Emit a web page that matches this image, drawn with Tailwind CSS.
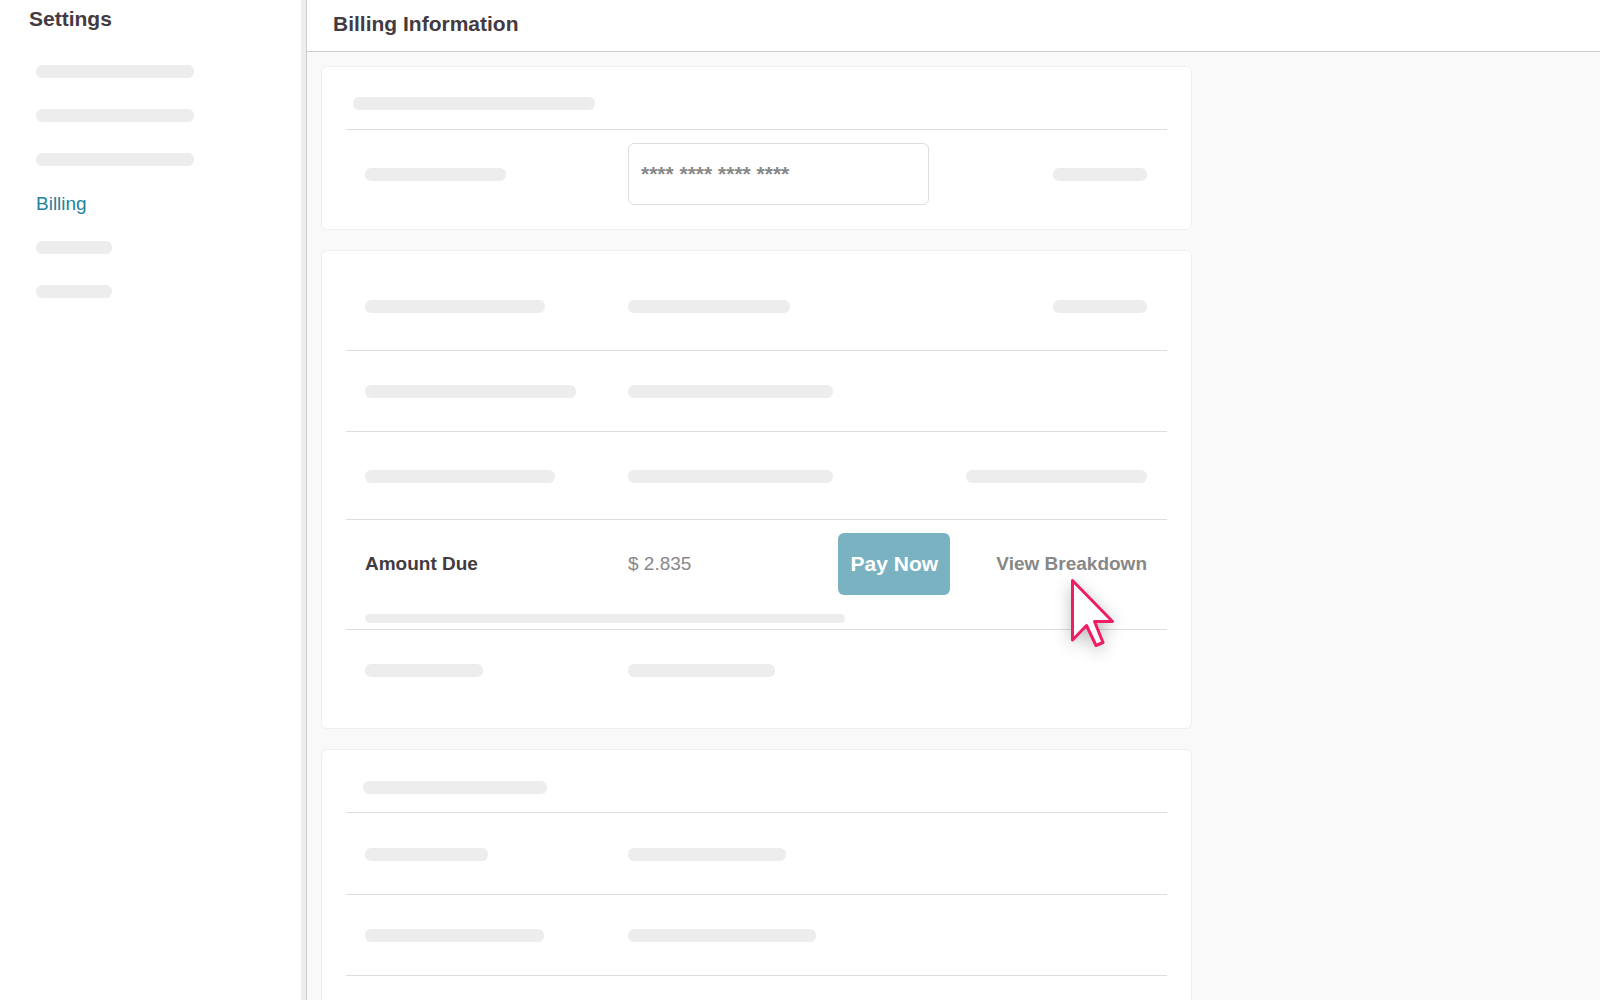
<!DOCTYPE html>
<html lang="en">
<head>
<meta charset="utf-8">
<meta name="viewport" content="width=device-width, initial-scale=1">
<title>Billing Information</title>
<script src="https://cdn.jsdelivr.net/npm/@tailwindcss/browser@4"></script>
</head>
<body class="flex h-screen overflow-hidden bg-white font-['Liberation_Sans',Arial,sans-serif] text-[19px] leading-6 text-[#433b41]">
  <aside class="w-[307px] shrink-0 border-r border-[#cccccc]">
    <div class="h-full border-r-[5px] border-[#ededed] pt-[5px]">
      <h2 class="pl-[29px] text-[21px] leading-7 font-bold">Settings</h2>
      <nav class="mt-8 pl-9" aria-label="Settings">
        <ul class="flex flex-col gap-[31px]">
          <li class="h-[13px] w-[158px] rounded-md bg-[#ededed]"></li>
          <li class="h-[13px] w-[158px] rounded-md bg-[#ededed]"></li>
          <li class="h-[13px] w-[158px] rounded-md bg-[#ededed]"></li>
          <li class="flex h-[13px] items-center"><a href="#billing" aria-current="page" class="text-[#24839b]">Billing</a></li>
          <li class="h-[13px] w-[76px] rounded-md bg-[#ededed]"></li>
          <li class="h-[13px] w-[76px] rounded-md bg-[#ededed]"></li>
        </ul>
      </nav>
    </div>
  </aside>

  <div class="flex min-w-0 flex-1 flex-col">
    <header class="flex h-[52px] shrink-0 items-center border-b border-[#cccccc] pb-1 pl-[26px]">
      <h1 class="text-[21px] leading-7 font-bold">Billing Information</h1>
    </header>

    <main id="billing" class="flex flex-1 flex-col gap-5 overflow-hidden bg-[#f9f9f9] p-3.5 pb-0">
      <!-- Payment method -->
      <section class="w-full max-w-[871px] shrink-0 rounded-md border border-[#efefef] bg-white px-6">
        <div class="border-b border-[#dddddd] pt-[30px] pb-[19px] pl-[7px]">
          <div class="h-[13px] w-[242px] rounded-md bg-[#ededed]"></div>
        </div>
        <div class="grid grid-cols-[263px_1fr_auto] items-center pt-[13px] pr-5 pb-6 pl-[19px]">
          <div class="h-[13px] w-[141px] rounded-md bg-[#ededed]"></div>
          <input type="text" aria-label="Card number" value="**** **** **** ****" class="h-[62px] w-[301px] rounded-md border border-[#dddddd] bg-white px-3 text-[21px] font-bold text-[#888888]">
          <div class="h-[13px] w-[94px] rounded-md bg-[#ededed]"></div>
        </div>
      </section>

      <!-- Plan and amount due -->
      <section class="w-full max-w-[871px] shrink-0 rounded-md border border-[#efefef] bg-white px-6">
        <div class="grid grid-cols-[263px_1fr_auto] border-b border-[#dddddd] pt-[49px] pr-5 pb-[37px] pl-[19px]">
          <div class="h-[13px] w-[180px] rounded-md bg-[#ededed]"></div>
          <div class="h-[13px] w-[162px] rounded-md bg-[#ededed]"></div>
          <div class="h-[13px] w-[94px] rounded-md bg-[#ededed]"></div>
        </div>
        <div class="grid grid-cols-[263px_1fr_auto] border-b border-[#dddddd] pt-[34px] pr-5 pb-[33px] pl-[19px]">
          <div class="h-[13px] w-[211px] rounded-md bg-[#ededed]"></div>
          <div class="h-[13px] w-[205px] rounded-md bg-[#ededed]"></div>
        </div>
        <div class="grid grid-cols-[263px_1fr_auto] border-b border-[#dddddd] pt-[38px] pr-5 pb-9 pl-[19px]">
          <div class="h-[13px] w-[190px] rounded-md bg-[#ededed]"></div>
          <div class="h-[13px] w-[205px] rounded-md bg-[#ededed]"></div>
          <div class="h-[13px] w-[181px] rounded-md bg-[#ededed]"></div>
        </div>
        <div class="border-b border-[#dddddd] pt-[13px] pr-5 pb-1.5 pl-[19px]">
          <div class="grid grid-cols-[263px_1fr_auto_auto] items-center">
            <h3 class="font-bold">Amount Due</h3>
            <p class="text-[#888888]">$ 2.835</p>
            <button type="button" class="mr-[46px] h-[62px] w-28 rounded-md bg-[#7ab2c1] text-[21px] font-bold text-white">Pay Now</button>
            <div class="relative">
              <a href="#breakdown" class="block font-bold whitespace-nowrap text-[#888888]">View Breakdown</a>
              <svg class="pointer-events-none absolute top-[23px] right-[30px] h-20 w-[52px] overflow-visible drop-shadow-[0_4px_8px_rgba(0,0,0,0.25)]" viewBox="0 0 52 80" aria-hidden="true">
                <path d="M7.5 5.5 47.5 46.5H29.5L38 67.500 31 70.500 21.500 50.500 7.500 65Z" fill="#ffffff" stroke="#ed1e61" stroke-width="3" stroke-linejoin="round"/>
              </svg>
            </div>
          </div>
          <div class="mt-[19px] h-[9px] w-[480px] rounded-md bg-[#ededed]"></div>
        </div>
        <div class="grid grid-cols-[263px_1fr_auto] pt-[34px] pr-5 pb-[51px] pl-[19px]">
          <div class="h-[13px] w-[118px] rounded-md bg-[#ededed]"></div>
          <div class="h-[13px] w-[147px] rounded-md bg-[#ededed]"></div>
        </div>
      </section>

      <!-- Additional details -->
      <section class="w-full max-w-[871px] shrink-0 rounded-md border border-[#efefef] bg-white px-6">
        <div class="border-b border-[#dddddd] pt-[31px] pb-[18px] pl-[17px]">
          <div class="h-[13px] w-[184px] rounded-md bg-[#ededed]"></div>
        </div>
        <div class="grid grid-cols-[263px_1fr_auto] border-b border-[#dddddd] pt-[35px] pr-5 pb-[33px] pl-[19px]">
          <div class="h-[13px] w-[123px] rounded-md bg-[#ededed]"></div>
          <div class="h-[13px] w-[158px] rounded-md bg-[#ededed]"></div>
        </div>
        <div class="grid grid-cols-[263px_1fr_auto] border-b border-[#dddddd] pt-[34px] pr-5 pb-[33px] pl-[19px]">
          <div class="h-[13px] w-[179px] rounded-md bg-[#ededed]"></div>
          <div class="h-[13px] w-[188px] rounded-md bg-[#ededed]"></div>
        </div>
        <div class="h-20"></div>
      </section>
    </main>
  </div>
</body>
</html>
